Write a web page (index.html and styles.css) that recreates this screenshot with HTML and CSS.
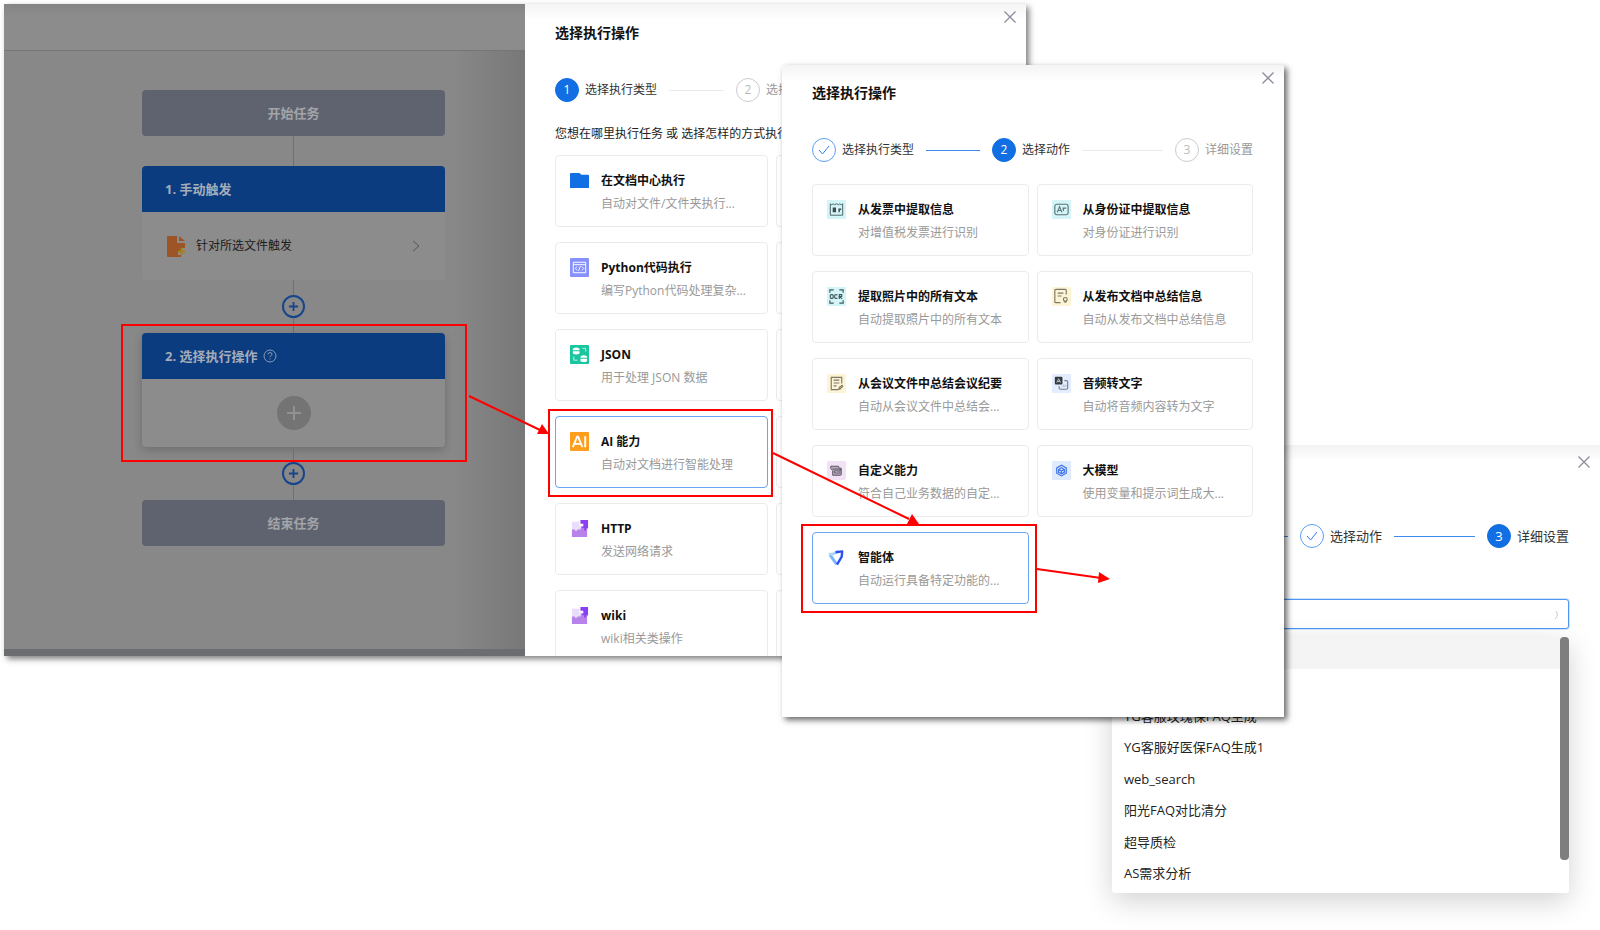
FILE: index.html
```html
<!DOCTYPE html>
<html lang="zh-CN">
<head>
    <meta charset="UTF-8">
    <meta name="viewport" content="width=device-width, initial-scale=1.0">
    <title>选择执行操作</title>
    <link rel="stylesheet" href="styles.css">
</head>
<body>
    <main class="stage">
        <!-- Step 3: detail settings -->
        <section class="window window-detail">
            <button class="close" aria-label="关闭"><svg viewBox="0 0 12 12"><path d="M0.500 0.500l11 11M11.500 0.500l-11 11"/></svg></button>
            <ol class="steps steps-large">
                <li class="line done"></li>
                <li class="step done"><span class="dot"><svg viewBox="0 0 12 12"><path d="M1 6l3.500 4L11 2"/></svg></span>选择动作</li>
                <li class="line done"></li>
                <li class="step active"><span class="dot">3</span>详细设置</li>
            </ol>
            <div class="select">
                <input type="text" aria-label="智能体">
                <svg class="spinner" viewBox="0 0 12 12"><path d="M8 2q3 4-1 8"/></svg>
                <div class="dropdown">
                    <ul>
                        <li class="hover"></li>
                        <li></li>
                        <li>YG客服玫瑰保FAQ生成</li>
                        <li>YG客服好医保FAQ生成1</li>
                        <li>web_search</li>
                        <li>阳光FAQ对比清分</li>
                        <li>超导质检</li>
                        <li>AS需求分析</li>
                    </ul>
                    <span class="scrollbar"></span>
                </div>
            </div>
        </section>

        <!-- Step 1: flow canvas with the drawer open -->
        <section class="window window-flow">
            <div class="canvas">
                <div class="canvas-header"></div>
                <div class="flow">
                    <div class="terminal">开始任务</div>
                    <div class="link link-short"></div>
                    <div class="node">
                        <h3>1. 手动触发</h3>
                        <div class="node-body">
                            <svg class="file" viewBox="0 0 19 22"><path fill="#9d5426" d="M1 1h9v7h8v5h-4v3h-3v4h3v2H1q-1 0-1-1V2q0-1 1-1zM12 1l6 5h-6z"/><path fill="none" stroke="#a57d1c" stroke-width="2" d="M14.500 13v7M11 16.500h7"/></svg>
                            <span>针对所选文件触发</span>
                            <svg class="chevron" viewBox="0 0 8 12"><path d="M1 1l6 5-6 5"/></svg>
                        </div>
                    </div>
                    <div class="link"><button class="add" aria-label="添加"><svg viewBox="0 0 12 12"><path d="M6 1v10M1 6h10"/></svg></button></div>
                    <div class="node selected">
                        <h3>2. 选择执行操作 <svg class="help" viewBox="0 0 14 14"><circle cx="7" cy="7" r="6"/><path d="M5 5.500q0-2 2-2t2 1.800q0 1-1.200 1.500Q7 7.200 7 8.200M7 9.500v1"/></svg></h3>
                        <div class="node-body">
                            <button class="add-action" aria-label="选择操作"><svg viewBox="0 0 16 16"><path d="M8 1v14M1 8h14"/></svg></button>
                        </div>
                    </div>
                    <div class="link"><button class="add" aria-label="添加"><svg viewBox="0 0 12 12"><path d="M6 1v10M1 6h10"/></svg></button></div>
                    <div class="terminal">结束任务</div>
                </div>
            </div>
            <div class="drawer">
                <button class="close" aria-label="关闭"><svg viewBox="0 0 12 12"><path d="M0.500 0.500l11 11M11.500 0.500l-11 11"/></svg></button>
                <h2>选择执行操作</h2>
                <ol class="steps">
                    <li class="step active"><span class="dot">1</span>选择执行类型</li>
                    <li class="line"></li>
                    <li class="step"><span class="dot">2</span>选择动作</li>
                </ol>
                <p class="prompt">您想在哪里执行任务 或 选择怎样的方式执行</p>
                <div class="cards">
                    <button class="card">
                        <svg viewBox="0 0 20 20"><path fill="#126fe3" d="M0 3q0-1 1-1h9l2 2h7q1 0 1 1v12q0 1-1 1H1q-1 0-1-1z"/></svg>
                        <span class="card-text"><b>在文档中心执行</b><small>自动对文件/文件夹执行...</small></span>
                    </button>
                    <div class="card"></div>
                    <button class="card">
                        <svg viewBox="0 0 20 20"><rect width="20" height="20" rx="1" fill="#8791fb"/><g fill="none" stroke="#fff"><path d="M3.500 4.500h13v11h-13zM3.500 7h13"/><path d="M7.500 9L5.500 11l2 2M12.500 9l2 2-2 2M11 8.500l-2 5"/></g></svg>
                        <span class="card-text"><b>Python代码执行</b><small>编写Python代码处理复杂...</small></span>
                    </button>
                    <div class="card"></div>
                    <button class="card">
                        <svg viewBox="0 0 20 20"><rect width="20" height="20" rx="1" fill="#18c6a0"/><g fill="#fff"><path d="M3 4q3.500-2.500 7 0v1.500H3zM3 6.500h7V9q-3.500 2-7 0zM11 12q3.500-2.500 7 0v1.500h-7zM11 14.500h7V17q-3.500 2-7 0z"/></g><path fill="none" stroke="#bff3e6" d="M13 3.500h3.500V7M4 12v4h4"/></svg>
                        <span class="card-text"><b>JSON</b><small>用于处理 JSON 数据</small></span>
                    </button>
                    <div class="card"></div>
                    <button class="card current">
                        <svg viewBox="0 0 20 20"><rect width="20" height="20" rx="1" fill="#ff9d1c"/><path fill="none" stroke="#fff" stroke-width="2" d="M3 16L7.500 5h1L13 16M5 12.500h6M16 4.500V16"/></svg>
                        <span class="card-text"><b>AI 能力</b><small>自动对文档进行智能处理</small></span>
                    </button>
                    <div class="card"></div>
                    <button class="card">
                        <svg viewBox="0 0 20 20"><path fill="#eadcfb" d="M2 3h8v4h4v5H2z"/><path fill="#b783ea" d="M2 11h3q1 3 3 0h3v-1h7v9H2z"/><path fill="#8a3ff0" d="M11 1h8v9h-2v2h-2v-2h-3V8h2V5h-3z"/></svg>
                        <span class="card-text"><b>HTTP</b><small>发送网络请求</small></span>
                    </button>
                    <div class="card"></div>
                    <button class="card">
                        <svg viewBox="0 0 20 20"><path fill="#eadcfb" d="M2 3h8v4h4v5H2z"/><path fill="#b783ea" d="M2 11h3q1 3 3 0h3v-1h7v9H2z"/><path fill="#8a3ff0" d="M11 1h8v9h-2v2h-2v-2h-3V8h2V5h-3z"/></svg>
                        <span class="card-text"><b>wiki</b><small>wiki相关类操作</small></span>
                    </button>
                    <div class="card"></div>
                </div>
            </div>
        </section>

        <!-- Step 2: choose action -->
        <section class="window window-action">
            <button class="close" aria-label="关闭"><svg viewBox="0 0 12 12"><path d="M0.500 0.500l11 11M11.500 0.500l-11 11"/></svg></button>
            <h2>选择执行操作</h2>
            <ol class="steps">
                <li class="step done"><span class="dot"><svg viewBox="0 0 12 12"><path d="M1 6l3.500 4L11 2"/></svg></span>选择执行类型</li>
                <li class="line done"></li>
                <li class="step active"><span class="dot">2</span>选择动作</li>
                <li class="line"></li>
                <li class="step"><span class="dot">3</span>详细设置</li>
            </ol>
            <div class="cards">
                <button class="card">
                    <svg viewBox="0 0 20 20"><rect width="20" height="20" rx="1" fill="#d3f5f8"/><path fill="none" stroke="#4d5f62" d="M3.500 16v-12l1.500 1 1.500-1 1.500 1 2-1 2 1 1.500-1 1.500 1 1.500-1v12z"/><path fill="#3e4b4e" d="M6 8h3.500v5H6zM12 9h3v1.500h-1.500V13H12z"/></svg>
                    <span class="card-text"><b>从发票中提取信息</b><small>对增值税发票进行识别</small></span>
                </button>
                <button class="card">
                    <svg viewBox="0 0 20 20"><rect width="20" height="20" rx="1" fill="#d3f5f8"/><g fill="none" stroke="#5d7276" stroke-width="1.200"><rect x="3" y="4.500" width="14" height="11" rx="2"/><path d="M5.500 13l2.500-6 2.500 6M6.500 11h3M11 8.500h4M12 8.500v3"/></g></svg>
                    <span class="card-text"><b>从身份证中提取信息</b><small>对身份证进行识别</small></span>
                </button>
                <button class="card">
                    <svg viewBox="0 0 20 20"><rect width="20" height="20" rx="1" fill="#d3f5f8"/><g fill="none" stroke="#44585b" stroke-width="1.200"><path d="M3 6V3h4M13 3h4v3M3 14v3h4M13 17h4v-3"/><rect x="3.500" y="8" width="3" height="4" rx="1"/><path d="M11 8.500Q8 7 8 10t3 1.500M13 12.500V8h2.500v2H13l3 2.500"/></g></svg>
                    <span class="card-text"><b>提取照片中的所有文本</b><small>自动提取照片中的所有文本</small></span>
                </button>
                <button class="card">
                    <svg viewBox="0 0 20 20"><rect width="20" height="20" rx="1" fill="#fdf4d6"/><g fill="none" stroke="#7c7867" stroke-width="1.200"><path d="M9 16.500H4q-1 0-1-1v-12q0-1 1-1h10q1 0 1 1V8M6 6.500h6M6 9.500h4"/><circle cx="14" cy="13" r="2"/><path d="M12.500 15l1.500 1 1.500-1"/></g></svg>
                    <span class="card-text"><b>从发布文档中总结信息</b><small>自动从发布文档中总结信息</small></span>
                </button>
                <button class="card">
                    <svg viewBox="0 0 20 20"><rect width="20" height="20" rx="1" fill="#fdf4d6"/><path fill="none" stroke="#7c7867" stroke-width="1.200" d="M12 16.500H4.500v-13h11V10M7 6.500h6M7 9.500h6M7 12.500h3M12.500 16l.5-2 3-2 .5 1-3 3z"/></svg>
                    <span class="card-text"><b>从会议文件中总结会议纪要</b><small>自动从会议文件中总结会...</small></span>
                </button>
                <button class="card">
                    <svg viewBox="0 0 20 20"><rect width="20" height="20" rx="1" fill="#e3edff"/><rect x="3" y="3" width="8" height="8" rx="1" fill="#35383f"/><path fill="none" stroke="#c8ccd5" d="M5 9l2-4 2 4M5.500 8h3"/><path fill="none" stroke="#777e8c" stroke-width="1.200" d="M13 7h2q1.500 0 1.500 1.500v6q0 1.500-1.500 1.500H9q-1.500 0-1.500-1.500V13"/><path fill="none" stroke="#a5adbd" d="M10 13h1M12.500 11v3M14.500 11.500v2"/></svg>
                    <span class="card-text"><b>音频转文字</b><small>自动将音频内容转为文字</small></span>
                </button>
                <button class="card">
                    <svg viewBox="0 0 20 20"><rect width="20" height="20" rx="2" fill="#f1e2f5"/><path fill="#b4aab8" stroke="#5b5260" d="M4 5.500h8l1 2h2v7l-1 .5H6v-5L4 8zM6 8.500h8v2H8v2h6"/></svg>
                    <span class="card-text"><b>自定义能力</b><small>符合自己业务数据的自定...</small></span>
                </button>
                <button class="card">
                    <svg viewBox="0 0 20 20"><rect width="20" height="20" rx="1" fill="#e0eaff"/><g fill="none" stroke="#3f74ea" stroke-width="1.300"><path d="M10 4.500l5 2.800v5.600l-5 2.800-5-2.800V7.300z"/><path d="M10 7l3 2v3l-3 1.500L7 12V9zM7 9l3 1.500L13 9M10 10.500v3"/></g></svg>
                    <span class="card-text"><b>大模型</b><small>使用变量和提示词生成大...</small></span>
                </button>
                <button class="card current">
                    <svg viewBox="0 0 20 20"><path fill="none" stroke="#79b5fb" stroke-width="3" stroke-linejoin="round" d="M10 17L3 7"/><path fill="none" stroke="#a9d5ff" stroke-width="3" d="M2 6.500h4l6-3"/><path fill="none" stroke="#2b4ff2" stroke-width="2.500" stroke-linejoin="round" d="M9 4.500l7-1L15.500 9l-5 8.500"/></svg>
                    <span class="card-text"><b>智能体</b><small>自动运行具备特定功能的...</small></span>
                </button>
            </div>
        </section>

        <!-- Red frames and arrows -->
        <svg class="marks" width="1120" height="620">
            <g fill="none" stroke="#f00" stroke-width="2">
                <rect x="122" y="325" width="344" height="136"/>
                <rect x="549" y="410" width="223" height="86"/>
                <rect x="802" y="525" width="234" height="87"/>
                <path d="M469 396l71 34M773 453l136 66M1037 569l64 9"/>
            </g>
            <g fill="#f00">
                <path d="M549 434l-12 0 5-10z"/>
                <path d="M919 524l-12 0 5-10z"/>
                <path d="M1110 579l-12 4 1-11z"/>
            </g>
        </svg>
    </main>
</body>
</html>
```

FILE: styles.css
```css
* {
    box-sizing: border-box;
}
body {
    margin: 0;
    background: #fff;
    color: #222;
    font-family: "Open Sans", "Noto Sans CJK SC", sans-serif;
    font-size: 12px;
    line-height: 20px;
}
h2, h3, p, ol, ul {
    margin: 0;
    padding: 0;
}
ol, ul {
    list-style: none;
}
button {
    padding: 0;
    border: none;
    background: none;
    font: inherit;
    color: inherit;
    cursor: pointer;
}
svg {
    display: block;
}
.stage {
    position: relative;
    min-height: 100vh;
    overflow: hidden;
}

/* windows lie over each other on the stage */
.window {
    position: absolute;
    background: #fff;
}
.window-flow {
    left: 4px;
    top: 4px;
    width: 1022px;
    height: 652px;
    display: flex;
    box-shadow: 3px 3px 6px rgba(0, 0, 0, 0.5);
}
.window-action {
    left: 782px;
    top: 65px;
    width: 502px;
    height: 652px;
    padding: 18px 31px 0 30px;
    background: linear-gradient(#f4f4f4, #fff 16px);
    box-shadow: 3px 3px 6px rgba(0, 0, 0, 0.6);
}
.window-detail {
    right: 0;
    top: 445px;
    width: 521px;
    bottom: 0;
    padding: 79px 31px 0 33px;
    background: linear-gradient(#f2f2f2, #fff 16px);
}
.close {
    position: absolute;
    top: 7px;
    right: 10px;
}
.window-detail .close {
    top: 11px;
}
.close svg {
    width: 12px;
    height: 12px;
    fill: none;
    stroke: #8b8c9c;
    stroke-width: 1.3;
}

/* canvas under the mask */
.canvas {
    flex: 1;
    display: flex;
    flex-direction: column;
    background: linear-gradient(90deg, transparent 86%, rgba(0, 0, 0, 0.12)), #888;
    border-bottom: 7px solid #6c6d71;
}
.canvas-header {
    height: 47px;
    background: linear-gradient(rgba(0, 0, 0, 0.06), transparent 12px), #8c8c8c;
    border-bottom: 1px solid #767676;
}
.flow {
    width: 441px;
    padding: 39px 0 0 138px;
}
.terminal {
    height: 46px;
    border-radius: 4px;
    background: #5f6370;
    color: #a3a4a8;
    font-size: 13px;
    font-weight: 700;
    line-height: 46px;
    text-align: center;
}
.link {
    height: 53px;
    display: flex;
    align-items: center;
    justify-content: center;
    background: linear-gradient(#707070, #707070) center / 1px 100% no-repeat;
}
.link-short {
    height: 30px;
}
.add {
    width: 23px;
    height: 23px;
    border: 2px solid #17458a;
    border-radius: 50%;
    background: #888;
    display: flex;
    align-items: center;
    justify-content: center;
}
.add svg {
    width: 11px;
    height: 11px;
    stroke: #17458a;
    stroke-width: 2;
}
.node {
    border-radius: 4px;
    overflow: hidden;
    background: #8c8c8c;
}
.node.selected {
    box-shadow: 0 3px 10px rgba(0, 0, 0, 0.2);
}
.node h3 {
    display: flex;
    align-items: center;
    gap: 5px;
    height: 46px;
    padding-left: 23px;
    background: #0b3c80;
    color: #a5acb8;
    font-size: 13px;
}
.help {
    width: 14px;
    height: 14px;
    fill: none;
    stroke: #8c9ab3;
}
.node-body {
    display: flex;
    align-items: center;
    height: 68px;
    padding: 0 25px;
    color: #1c1c1c;
}
.selected .node-body {
    justify-content: center;
}
.file {
    width: 19px;
    height: 22px;
    margin-right: 10px;
}
.chevron {
    width: 8px;
    height: 12px;
    margin-left: auto;
    fill: none;
    stroke: #555;
}
.add-action {
    width: 34px;
    height: 34px;
    border-radius: 50%;
    background: #747474;
    display: flex;
    align-items: center;
    justify-content: center;
}
.add-action svg {
    width: 16px;
    height: 16px;
    stroke: #929292;
    stroke-width: 2;
}

/* drawer */
.drawer {
    position: relative;
    width: 501px;
    padding: 19px 37px 0 30px;
    background: linear-gradient(#f4f4f4, #fff 16px);
    overflow: hidden;
}
h2 {
    color: #111;
    font-size: 14px;
    line-height: 20px;
}
.prompt {
    margin-top: 22px;
    line-height: 20px;
    white-space: nowrap;
}

/* steps */
.steps {
    display: flex;
    align-items: center;
    margin-top: 35px;
}
.step {
    display: flex;
    align-items: center;
    gap: 6px;
    color: #999;
    white-space: nowrap;
}
.step.active, .step.done {
    color: #333;
}
.dot {
    width: 24px;
    height: 24px;
    border: 1px solid #ccc;
    border-radius: 50%;
    display: flex;
    align-items: center;
    justify-content: center;
    color: #bbb;
}
.active .dot {
    border-color: #126fe3;
    background: #126fe3;
    color: #fff;
}
.done .dot {
    border-color: #5c9ff5;
}
.dot svg {
    width: 12px;
    height: 12px;
    fill: none;
    stroke: #2f80ee;
}
.line {
    flex: 2;
    height: 1px;
    margin: 0 12px;
    background: #ebebeb;
}
.line.done {
    background: #3c8af0;
}
.line:nth-child(4) {
    flex: 3;
}
.drawer .line {
    flex: none;
    width: 55px;
}
.steps-large {
    justify-content: flex-end;
    margin-top: 0;
    font-size: 13px;
}
.steps-large .line {
    flex: none;
    width: 81px;
}

/* cards */
.cards {
    display: grid;
    grid-template-columns: 1fr 1fr;
    gap: 15px 8px;
    margin-top: 11px;
}
.window-action .cards {
    margin-top: 22px;
}
.card {
    display: flex;
    align-items: flex-start;
    gap: 12px;
    height: 72px;
    padding: 15px 14px 0;
    border: 1px solid #ebebeb;
    border-radius: 4px;
    background: #fff;
    text-align: left;
    white-space: nowrap;
}
.card.current {
    border-color: #69a5f3;
}
.card svg {
    flex: none;
    width: 19px;
    height: 19px;
}
.card-text b, .card-text small {
    display: block;
    font-size: 12px;
}
.card-text b {
    color: #111;
}
.card-text small {
    margin-top: 3px;
    color: #999;
}

/* select with its list open */
.select {
    position: relative;
    margin-top: 51px;
}
.select input {
    display: block;
    width: 100%;
    height: 30px;
    border: 1px solid #4e97f2;
    border-radius: 3px;
    outline: none;
    box-shadow: 0 0 0 1px rgba(22, 119, 255, 0.2);
}
.spinner {
    position: absolute;
    top: 10px;
    right: 9px;
    width: 12px;
    height: 12px;
    fill: none;
    stroke: #ccc;
}
.dropdown {
    position: absolute;
    top: 38px;
    left: 0;
    right: 0;
    border-radius: 3px;
    background: #fff;
    box-shadow: 0 8px 28px rgba(0, 0, 0, 0.18);
}
.dropdown ul {
    display: grid;
    grid-template-rows: repeat(8, 1fr);
    height: 256px;
    padding-bottom: 4px;
    font-size: 13px;
}
.dropdown li {
    display: flex;
    align-items: center;
    padding: 0 12px;
}
.dropdown .hover {
    background: #f4f4f4;
}
.scrollbar {
    position: absolute;
    top: 0;
    right: 0;
    width: 9px;
    height: 223px;
    border-radius: 4px;
    background: #7e7e7e;
}

.marks {
    position: absolute;
    top: 0;
    left: 0;
    pointer-events: none;
}
```
